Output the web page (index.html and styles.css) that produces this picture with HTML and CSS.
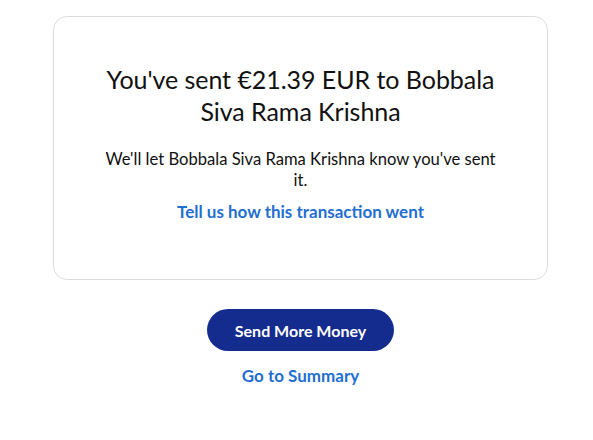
FILE: index.html
```html
<!DOCTYPE html>
<html>
<head>
<meta charset="utf-8">
<link rel="stylesheet" href="styles.css">
</head>
<body>
<main class="page">
  <section class="card">
    <h1 class="title">You've sent €21.39 EUR to Bobbala Siva Rama Krishna</h1>
    <p class="message">We'll let Bobbala Siva Rama Krishna know you've sent it.</p>
    <a class="link feedback" href="#">Tell us how this transaction went</a>
  </section>
  <div class="actions">
    <button class="primary">Send More Money</button>
    <a class="link" href="#">Go to Summary</a>
  </div>
</main>
</body>
</html>
```
FILE: styles.css
```css
html, body {
  margin: 0;
  padding: 0;
  background: #ffffff;
}
body {
  font-family: Lato, "Liberation Sans", sans-serif;
  color: #000;
}
.page {
  width: 495px;
  margin: 16px 0 0 53px;
  display: flex;
  flex-direction: column;
  align-items: center;
}
.card {
  box-sizing: border-box;
  width: 495px;
  height: 264px;
  border: 1px solid #dcdcdc;
  border-radius: 14px;
  padding: 46px 48px 0;
  display: flex;
  flex-direction: column;
  align-items: center;
  text-align: center;
}
.title {
  margin: 0;
  font-weight: 400;
  font-size: 25px;
  letter-spacing: -0.05px;
  line-height: 32px;
  color: #111;
}
.message {
  margin: 22px 0 0;
  font-size: 16.6px;
  line-height: 21px;
  color: #111;
}
.link {
  font-weight: 700;
  font-size: 17px;
  line-height: 20px;
  color: #1f6fd1;
  text-decoration: none;
}
.feedback {
  margin-top: 11px;
}
.actions {
  margin-top: 29px;
  display: flex;
  flex-direction: column;
  align-items: center;
  gap: 15px;
}
.primary {
  width: 187px;
  height: 42px;
  border: none;
  border-radius: 21px;
  background: #142c8e;
  color: #fff;
  font-family: inherit;
  font-weight: 700;
  font-size: 16px;
}
```
